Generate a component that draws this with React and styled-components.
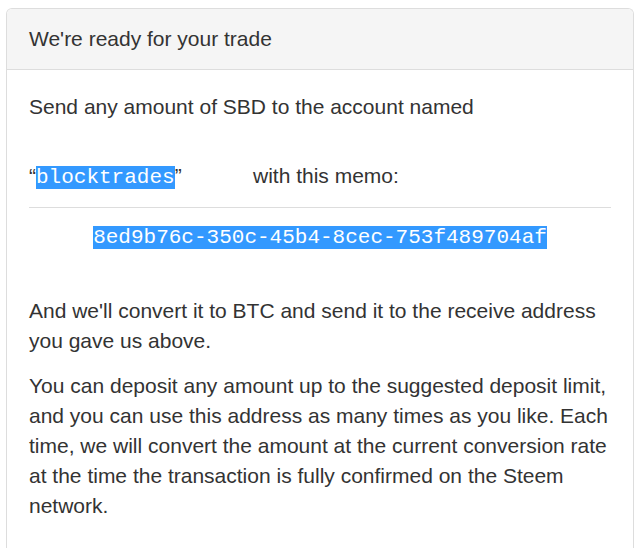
import React from "react";
import styled, { createGlobalStyle } from "styled-components";

const GlobalStyle = createGlobalStyle`
  body {
    margin: 0;
    background: #ffffff;
    font-family: "Liberation Sans", Arial, sans-serif;
    font-size: 21px;
    line-height: 30px;
    color: #333333;
  }
`;

const Panel = styled.div`
  margin: 8px 4px 0 6px;
  border: 1px solid #dddddd;
  border-bottom: none;
  border-radius: 6px 6px 0 0;
  background: #ffffff;
  height: 540px;
  box-sizing: border-box;
`;

const Heading = styled.div`
  background: #f5f5f5;
  border-bottom: 1px solid #dddddd;
  border-radius: 5px 5px 0 0;
  padding: 15px 22px;
  line-height: 30px;
`;

const Body = styled.div`
  padding: 22px 22px 0 22px;
`;

const Para = styled.p`
  margin: 0 0 ${(p) => p.$gap || 15}px;
`;

const MemoRow = styled.div`
  display: flex;
  align-items: baseline;
  height: 30px;
`;

const AccountCell = styled.span`
  width: 224px;
  flex-shrink: 0;
`;

const Selected = styled.span`
  background: #3399ff;
  color: #ffffff;
  font-family: "Liberation Mono", "Courier New", monospace;
`;

const Rule = styled.hr`
  border: 0;
  border-top: 1px solid #dddddd;
  margin: 16px 0 13px;
`;

const Memo = styled.div`
  text-align: center;
  margin-bottom: 43px;
`;

export default function App() {
  return (
    <>
      <GlobalStyle />
      <Panel>
        <Heading>We're ready for your trade</Heading>
        <Body>
          <Para $gap={39}>Send any amount of SBD to the account named</Para>
          <MemoRow>
            <AccountCell>
              “<Selected>blocktrades</Selected>”
            </AccountCell>
            <span>with this memo:</span>
          </MemoRow>
          <Rule />
          <Memo>
            <Selected>8ed9b76c-350c-45b4-8cec-753f489704af</Selected>
          </Memo>
          <Para>
            And we'll convert it to BTC and send it to the receive address you
            gave us above.
          </Para>
          <Para>
            You can deposit any amount up to the suggested deposit limit, and
            you can use this address as many times as you like. Each time, we
            will convert the amount at the current conversion rate at the time
            the transaction is fully confirmed on the Steem network.
          </Para>
        </Body>
      </Panel>
    </>
  );
}
